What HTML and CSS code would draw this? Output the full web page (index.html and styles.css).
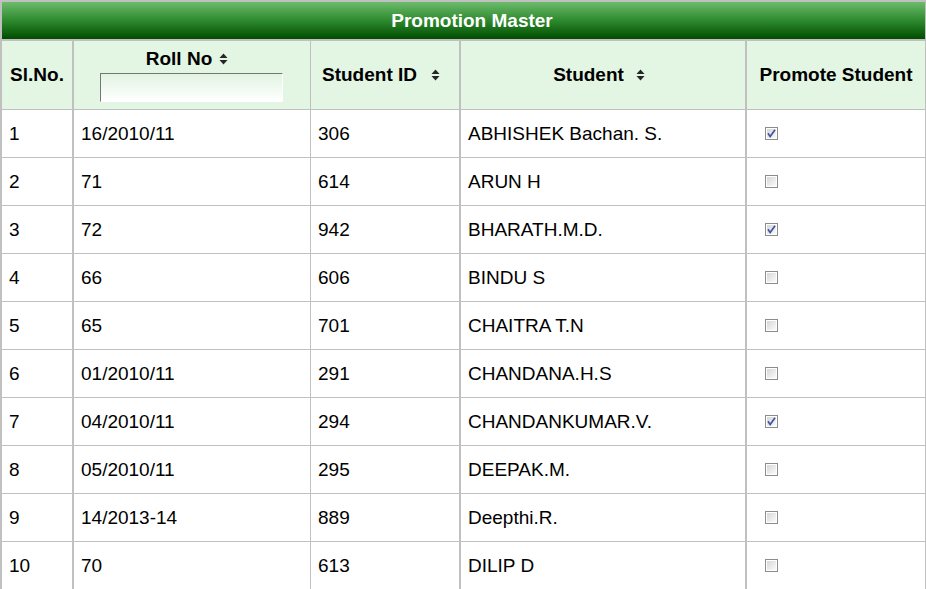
FILE: index.html
```html
<!DOCTYPE html>
<html lang="en">
<head>
<meta charset="utf-8">
<title>Promotion Master</title>
<link rel="stylesheet" href="styles.css">
</head>
<body>
<div class="panel">
  <div class="title">Promotion Master</div>
  <div class="grid">
    <div class="hc">Sl.No.</div>
    <div class="hc hc-sort hc-roll">
      <div class="hlabel">Roll No<svg class="sort s-roll" width="9" height="12" viewBox="0 0 9 12"><polygon points="0.5,5 4.5,0.5 8.5,5"/><polygon points="0.5,7 4.5,11.5 8.5,7"/></svg></div>
      <input class="filter" type="text">
    </div>
    <div class="hc hc-sort"><div class="hlabel">Student ID<svg class="sort s-id" width="9" height="12" viewBox="0 0 9 12"><polygon points="0.5,5 4.5,0.5 8.5,5"/><polygon points="0.5,7 4.5,11.5 8.5,7"/></svg></div></div>
    <div class="hc hc-sort"><div class="hlabel">Student<svg class="sort s-st" width="9" height="12" viewBox="0 0 9 12"><polygon points="0.5,5 4.5,0.5 8.5,5"/><polygon points="0.5,7 4.5,11.5 8.5,7"/></svg></div></div>
    <div class="hc hc-last">Promote Student</div>

    <div class="c">1</div><div class="c">16/2010/11</div><div class="c c-t">306</div><div class="c">ABHISHEK Bachan. S.</div><div class="c c-cb c-last"><svg class="cb" width="13" height="13" viewBox="0 0 13 13"><use href="#cb-box"/><use href="#cb-check"/></svg></div>
    <div class="c">2</div><div class="c">71</div><div class="c c-t">614</div><div class="c">ARUN H</div><div class="c c-cb c-last"><svg class="cb" width="13" height="13" viewBox="0 0 13 13"><use href="#cb-box"/></svg></div>
    <div class="c">3</div><div class="c">72</div><div class="c c-t">942</div><div class="c">BHARATH.M.D.</div><div class="c c-cb c-last"><svg class="cb" width="13" height="13" viewBox="0 0 13 13"><use href="#cb-box"/><use href="#cb-check"/></svg></div>
    <div class="c">4</div><div class="c">66</div><div class="c c-t">606</div><div class="c">BINDU S</div><div class="c c-cb c-last"><svg class="cb" width="13" height="13" viewBox="0 0 13 13"><use href="#cb-box"/></svg></div>
    <div class="c">5</div><div class="c">65</div><div class="c c-t">701</div><div class="c">CHAITRA T.N</div><div class="c c-cb c-last"><svg class="cb" width="13" height="13" viewBox="0 0 13 13"><use href="#cb-box"/></svg></div>
    <div class="c">6</div><div class="c">01/2010/11</div><div class="c c-t">291</div><div class="c">CHANDANA.H.S</div><div class="c c-cb c-last"><svg class="cb" width="13" height="13" viewBox="0 0 13 13"><use href="#cb-box"/></svg></div>
    <div class="c">7</div><div class="c">04/2010/11</div><div class="c c-t">294</div><div class="c">CHANDANKUMAR.V.</div><div class="c c-cb c-last"><svg class="cb" width="13" height="13" viewBox="0 0 13 13"><use href="#cb-box"/><use href="#cb-check"/></svg></div>
    <div class="c">8</div><div class="c">05/2010/11</div><div class="c c-t">295</div><div class="c">DEEPAK.M.</div><div class="c c-cb c-last"><svg class="cb" width="13" height="13" viewBox="0 0 13 13"><use href="#cb-box"/></svg></div>
    <div class="c">9</div><div class="c">14/2013-14</div><div class="c c-t">889</div><div class="c">Deepthi.R.</div><div class="c c-cb c-last"><svg class="cb" width="13" height="13" viewBox="0 0 13 13"><use href="#cb-box"/></svg></div>
    <div class="c">10</div><div class="c">70</div><div class="c c-t">613</div><div class="c">DILIP D</div><div class="c c-cb c-last"><svg class="cb" width="13" height="13" viewBox="0 0 13 13"><use href="#cb-box"/></svg></div>
  </div>
</div>

<svg class="defs" width="0" height="0">
  <defs>
    <linearGradient id="cbg" x1="0" y1="0" x2="1" y2="1">
      <stop offset="0" stop-color="#d6d6d6"/>
      <stop offset="1" stop-color="#fbfbfb"/>
    </linearGradient>
    <g id="cb-box">
      <rect x="0.5" y="0.5" width="12" height="12" fill="#fff" stroke="#8c8c8c"/>
      <rect x="2" y="2" width="9" height="9" fill="url(#cbg)"/>
    </g>
    <path id="cb-check" d="M3 6.2 L5.2 9.6 L10 2.8" fill="none" stroke="#3f55a0" stroke-width="1.7"/>
  </defs>
</svg>
</body>
</html>
```

FILE: styles.css
```css
html, body {
  margin: 0;
  padding: 0;
  background: #fff;
}

body {
  font-family: "Liberation Sans", Arial, sans-serif;
  color: #000;
  overflow: hidden;
}

.panel {
  width: 924px;
  border-left: 2px solid #c0c0c0;
  border-top: 2px solid #c0c0c0;
}

.title {
  height: 37px;
  border-bottom: 2px solid #c0c0c0;
  border-right: 1px solid #c0c0c0;
  background: linear-gradient(to bottom, #6cbb6c 0%, #2e8a2e 50%, #004c00 100%);
  color: #fff;
  font-weight: bold;
  font-size: 19px;
  line-height: 37px;
  text-align: center;
  padding-left: 17px;
}

.grid {
  display: grid;
  grid-template-columns: 72px 237px 150px 286px 179px;
  grid-auto-rows: 48px;
  grid-template-rows: 69px;
}

.hc, .c {
  box-sizing: border-box;
  border-right: 2px solid #c0c0c0;
  border-bottom: 1px solid #c0c0c0;
}

.hc {
  background: #e3f5e3;
  font-weight: bold;
  font-size: 19px;
  display: flex;
  flex-direction: column;
  align-items: center;
  justify-content: center;
  text-align: center;
}

.grid > :nth-child(5n+2) {
  border-right-width: 1px;
}

.hc-last, .c-last {
  border-right-width: 1px;
}

.hc-sort {
  padding-right: 8px;
}

.hc-roll {
  padding-right: 10px;
  padding-top: 2px;
  justify-content: flex-start;
}

.hlabel {
  display: flex;
  align-items: center;
  line-height: 22px;
}

.hc-roll .hlabel {
  margin-top: 5px;
}

.sort {
  fill: #262626;
  flex: none;
}

.s-roll { margin-left: 7px; }
.s-id { margin-left: 14px; }
.s-st { margin-left: 12px; }

.filter {
  box-sizing: border-box;
  width: 183px;
  height: 29px;
  margin: 3px 0 0 9px;
  padding: 0;
  border-style: solid;
  border-width: 1px;
  border-color: #767676 #ffffff #ffffff #767676;
  background: linear-gradient(to bottom, #e2f3e2 0%, #ffffff 100%);
}

.c {
  font-size: 19px;
  display: flex;
  align-items: center;
  padding-left: 7px;
  white-space: nowrap;
}

.c-cb {
  padding-left: 18px;
}

.cb {
  display: block;
}

.defs {
  position: absolute;
  width: 0;
  height: 0;
}
```
